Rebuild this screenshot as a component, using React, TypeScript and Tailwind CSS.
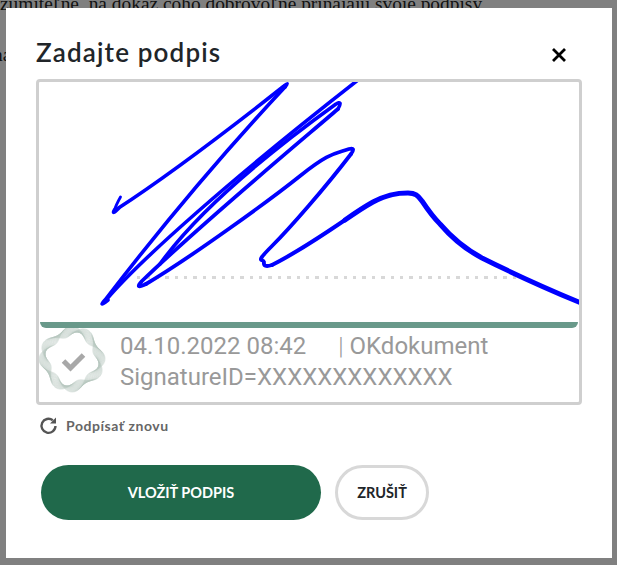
import React from "react";

const strokes: { w: number; d: string }[] = [
  { w: 2.8, d: "M120.5 197Q116 205 114.500 210" },
  { w: 3.6, d: "M114.500 210Q111 216 120 207M117 209Q180 168 284 86Q290 81 285 87" },
  { w: 3.6, d: "M285 87Q195 183 105 300Q98 308 108 300" },
  { w: 3.6, d: "M106 300C140 260 230 180 358 80" },
  { w: 3.6, d: "M160 264C200 208 275 148 336 104Q343 100 338 109" },
  { w: 3.8, d: "M338 109C290 150 200 225 142 281Q134 290 146 284" },
  { w: 3.8, d: "M146 284C190 258 270 200 300 176S335 154 349 149Q356 147 351 154" },
  { w: 3.8, d: "M351 154C325 188 290 228 272 246S263 258 264 262Q263 268 272 265" },
  { w: 4, d: "M272 265C296 253 320 237 345 220" },
  { w: 5, d: "M345 220C355 213 364 207 373 202C388 194 398 193 408 193C416 193 418 196 422 201C428 210 432 216 440 224C452 238 465 249 482 258C510 272 545 288 581 303" },
];

function rosettePaths() {
  const paths: string[] = [];
  for (let k = -1; k <= 1.001; k += 0.1) {
    let d = "";
    for (let i = 0; i <= 240; i++) {
      const t = (i / 240) * Math.PI * 2;
      const r = 27.500 + k * 5.500 * Math.sin(4 * t + k * 0.55);
      const x = 33 + r * Math.cos(t);
      const y = 31 + r * Math.sin(t);
      d += `${i === 0 ? "M" : "L"}${x.toFixed(2)} ${y.toFixed(2)}`;
    }
    paths.push(d + "Z");
  }
  return paths;
}

const dots = Array.from({ length: 41 }, (_, i) => i);

function Stamp() {
  return (
    <svg width="70" height="70" viewBox="0 0 70 70" className="shrink-0">
      <g fill="none" stroke="#9fb5aa" strokeWidth="0.35" opacity="0.75" transform="rotate(14 33 31)">
        {rosettePaths().map((d, i) => (
          <path key={i} d={d} />
        ))}
      </g>
      <path d="M24.500 33l7 7 13-13" fill="none" stroke="#a8a8a8" strokeWidth="5" />
    </svg>
  );
}

function Signature() {
  return (
    <svg className="absolute left-0 top-0 h-[240px] w-[540px]" viewBox="39 82 540 240" fill="none" stroke="#0000ff" strokeLinecap="round" strokeLinejoin="round">
      {strokes.map((s, i) => (
        <path key={i} strokeWidth={s.w} d={s.d} />
      ))}
    </svg>
  );
}

export default function App() {
  return (
    <div className="relative h-[565px] w-[617px] overflow-hidden bg-[#808080] font-['Liberation_Serif',serif] text-[19.4px] text-[#111]">
      <p className="-mt-[7px] whitespace-nowrap leading-[22px]">zumiteľné, na dôkaz čoho dobrovoľne prinájajú svoje podpisy</p>
      <p className="-ml-[7px] mt-[29px] leading-[22px]">na</p>

      <div className="absolute left-[6px] top-[8px] flex h-[550px] w-[606px] flex-col bg-white pl-[30px] pr-[30px] font-['Lato',sans-serif]">
        <div className="flex items-center justify-between pt-[27px]">
          <h1 className="text-[26px] font-semibold leading-[34px] tracking-[1.150px] text-[#212529]">Zadajte podpis</h1>
          <svg width="16" height="16" viewBox="0 0 16 16" className="mr-[15px] mt-[5px]" stroke="#000" strokeWidth="2.8">
            <path d="M2 2l12 12M14 2L2 14" />
          </svg>
        </div>

        <div className="mt-[10px] flex h-[326px] w-[546px] flex-col rounded-[4px] border-[3px] border-[#cfcfcf]">
          <div className="relative h-[240px] overflow-hidden">
            <div className="absolute left-[98px] top-[194px] flex gap-[6px]">
              {dots.map((i) => (
                <span key={i} className="size-[3.400px] bg-[#d8d8d8]" />
              ))}
            </div>
            <Signature />
          </div>
          <div className="mx-px h-[6px] rounded-b-[6px] bg-[#69998a]" />
          <div className="flex font-['Roboto',sans-serif] text-[24px] leading-[31px] text-[#999999]">
            <Stamp />
            <div className="ml-[11px] pt-[3px]">
              <div className="flex whitespace-nowrap">
                <span>04.10.2022 08:42</span>
                <span className="ml-[32px] font-light">|</span>
                <span className="ml-[6px]">OKdokument</span>
              </div>
              <div className="whitespace-nowrap">SignatureID=XXXXXXXXXXXXX</div>
            </div>
          </div>
        </div>

        <div className="mt-[10px] flex items-center gap-[8px] pl-[3px]">
          <svg width="19" height="19" viewBox="0 0 19 19" fill="none">
            <path d="M16.500 10A7 7 0 1 1 13.800 4.300" stroke="#555" strokeWidth="2.400" />
            <path d="M17 1.500v6h-6z" fill="#555" />
          </svg>
          <span className="text-[14px] font-bold tracking-[0.55px] text-[#666]">Podpísať znovu</span>
        </div>

        <div className="mt-[29px] flex gap-[14px] pl-[5px]">
          <button className="h-[55px] w-[280px] rounded-full bg-[#20694b] text-[14.500px] font-bold text-white">VLOŽIŤ PODPIS</button>
          <button className="h-[55px] w-[94px] rounded-full border-[3px] border-[#d8d8d8] bg-white text-[14.500px] font-bold text-[#212529]">ZRUŠIŤ</button>
        </div>
      </div>
    </div>
  );
}
